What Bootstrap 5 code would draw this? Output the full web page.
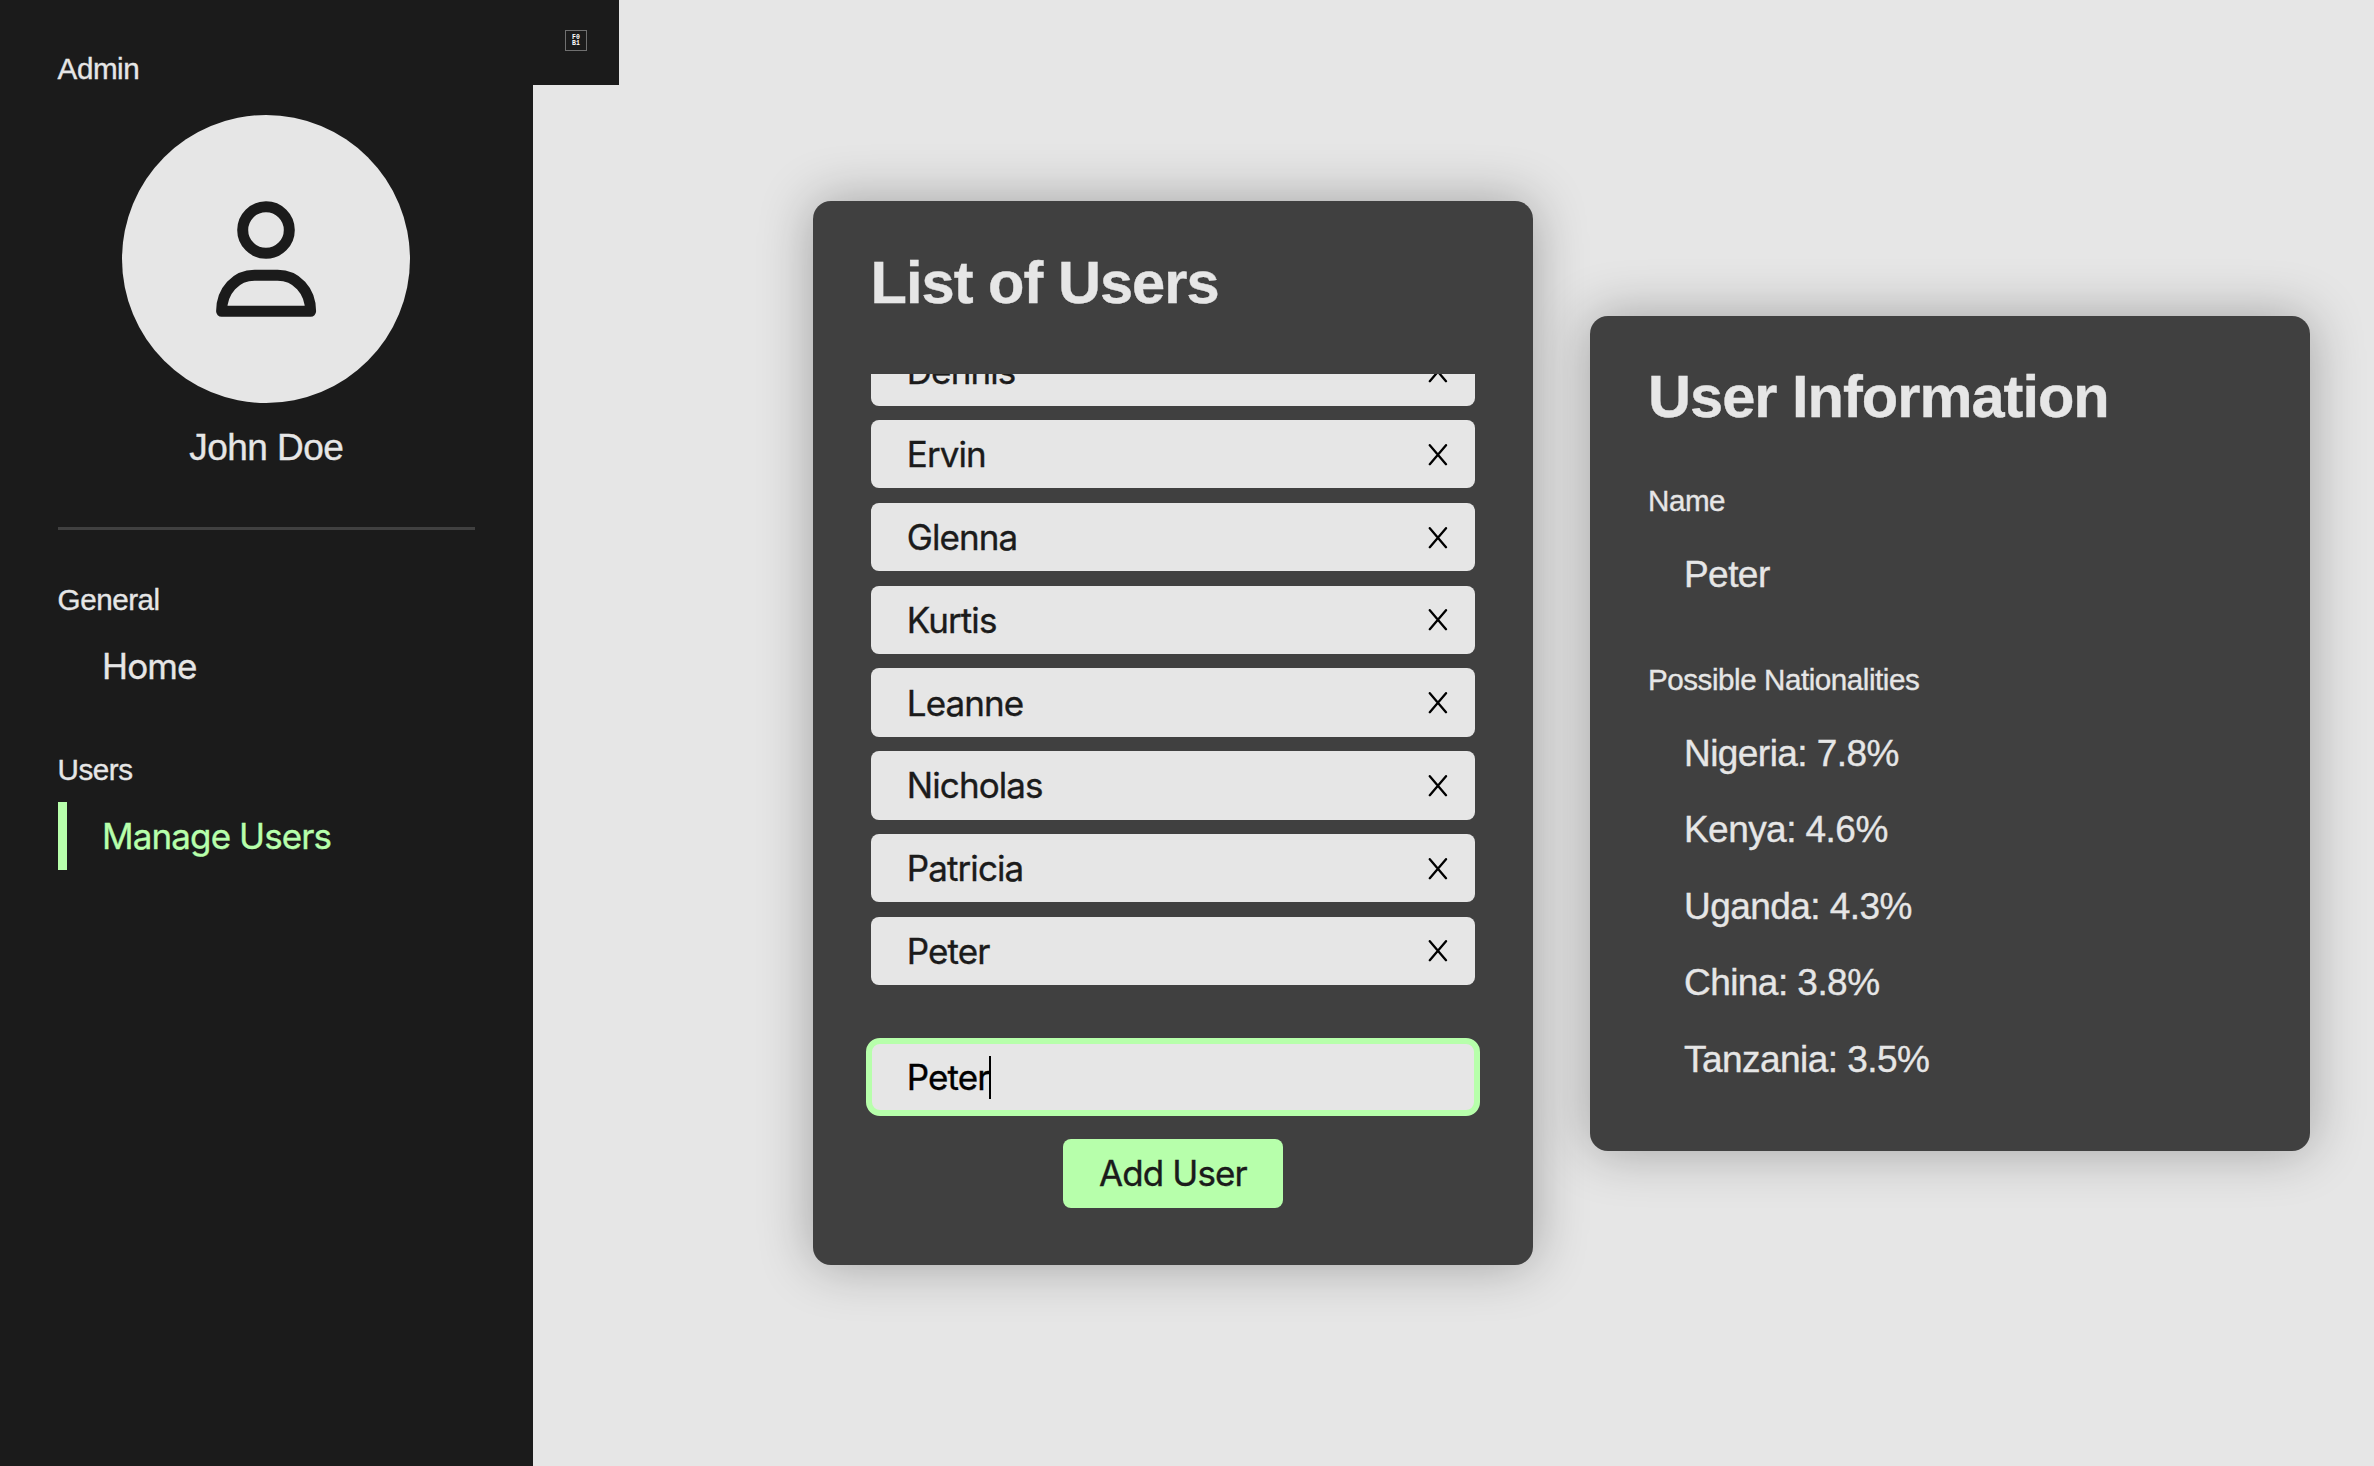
<!DOCTYPE html>
<html lang="en">
<head>
<meta charset="utf-8">
<meta name="viewport" content="width=device-width, initial-scale=1">
<title>Manage Users</title>
<link rel="stylesheet" href="https://cdn.jsdelivr.net/npm/bootstrap@5.3.0/dist/css/bootstrap.min.css">
<style>
  :root { --ink: #1b1b1b; --paper: #e6e6e6; --panel: #404040; --accent: #b7ffab; }
  body { font-family: "Liberation Sans", Arial, sans-serif; font-size: 37px; letter-spacing: -.55px; line-height: 1; background: var(--paper); color: var(--paper); height: 1466px; -webkit-text-stroke: .35px; }
  .sidebar { width: 532.6px; background: var(--ink); padding: 54.6px 57.6px 0; }
  .side-toggle { left: 532px; top: 0; width: 87px; height: 85px; background: var(--ink); padding: 30px 0 0 33px; }
  .glyph-box { width: 22px; height: 21px; border: 1px solid #707070; font: bold 6.5px/6px "Liberation Mono", monospace; letter-spacing: 0; color: #fff; -webkit-text-stroke: 0; }
  .caption-text { font-size: 29.6px; line-height: 28.8px; letter-spacing: -.45px; }
  .avatar { width: 288px; height: 288px; background: var(--paper); margin-top: 31.6px; }
  .user-name { margin-top: 26.8px; line-height: 36px; }
  .divider { height: 3px; background: var(--panel); margin: 61px 0 56px; }
  .ui-text { font-family: Inter, "Liberation Sans", sans-serif; font-size: 35px; letter-spacing: -.9px; }
  .side-link { height: 68.4px; margin-top: 17.900px; margin-bottom: 54.9px; border-left: 9px solid transparent; padding-left: 35.500px; color: var(--paper); }
  .side-link.active { border-color: var(--accent); color: var(--accent); margin-top: 17.400px; }
  main { padding-left: 280.4px; gap: 57.4px; }
  .panel { width: 720px; background: var(--panel); border-radius: 18px; padding: 57.6px; box-shadow: 0 0 54px rgba(0,0,0,.3); }
  .panel h2 { font-size: 59.6px; line-height: 51px; font-weight: 700; letter-spacing: -1px; margin: -1px 0 0; }
  .user-list { height: 611px; margin: 66px 0 57.4px; gap: 14.4px; }
  .user-item { height: 68.4px; background: var(--paper); color: var(--ink); border-radius: 8px; padding: 1px 27.500px 0 36.200px; }
  .name-input { height: 68.4px; background: var(--paper); color: #000; border-radius: 9px; outline: 6.600px solid var(--accent); outline-offset: -1.3px; padding: 1px 0 0 36.200px; }
  .caret { width: 2px; height: 43px; background: #000; margin-left: -.5px; }
  .add-btn { height: 68.4px; width: 219.6px; background: var(--accent); color: var(--ink); border-radius: 8px; margin-top: 28.6px; line-height: 1; -webkit-text-stroke: .35px; }
  .info { height: 835px; }
  .info h2 { margin-top: -2px; }
  .info dl { padding-top: 65px; }
  .info dt { font-weight: 400; }
  .info dd { line-height: 76.4px; margin: 0 0 0 36px; }
  .info dd + dt { margin-top: 52px; }
  .info dt + dd { margin-top: 21.4px; }
</style>
</head>
<body class="d-flex position-relative overflow-hidden">
  <aside class="sidebar h-100 flex-shrink-0">
    <div class="caption-text">Admin</div>
    <div class="avatar rounded-circle mx-auto">
      <svg class="d-block" width="288" height="288" viewBox="0 0 288 288" fill="none" stroke="#1b1b1b" stroke-width="11" stroke-linejoin="round">
        <circle cx="144" cy="115" r="23.3"/>
        <path d="M99.6 196.3C99.6 175.5 114 160.3 132.6 160.3H155.6C174.200 160.3 188.600 175.5 188.600 196.3Z"/>
      </svg>
    </div>
    <div class="user-name text-center">John Doe</div>
    <div class="divider"></div>
    <div class="caption-text">General</div>
    <a class="side-link ui-text d-flex align-items-center text-decoration-none" href="#">Home</a>
    <div class="caption-text">Users</div>
    <a class="side-link ui-text active d-flex align-items-center text-decoration-none" href="#">Manage Users</a>
  </aside>
  <div class="side-toggle position-absolute"><div class="glyph-box d-flex flex-column align-items-center justify-content-center"><span>F0</span><span>B1</span></div></div>
  <main class="d-flex align-items-center h-100">
    <section class="panel flex-shrink-0">
      <h2>List of Users</h2>
      <div class="user-list ui-text d-flex flex-column justify-content-end overflow-hidden" id="users"></div>
      <div class="name-input ui-text d-flex align-items-center"><span>Peter</span><span class="caret"></span></div>
      <div class="text-center"><button class="add-btn ui-text btn border-0 p-0 align-top">Add User</button></div>
    </section>
    <section class="panel info flex-shrink-0">
      <h2>User Information</h2>
      <dl class="mb-0">
        <dt class="caption-text">Name</dt>
        <dd>Peter</dd>
        <dt class="caption-text">Possible Nationalities</dt>
        <dd>Nigeria: 7.8%</dd><dd>Kenya: 4.6%</dd><dd>Uganda: 4.3%</dd><dd>China: 3.8%</dd><dd>Tanzania: 3.5%</dd>
      </dl>
    </section>
  </main>
<script src="https://cdn.jsdelivr.net/npm/bootstrap@5.3.0/dist/js/bootstrap.bundle.min.js"></script>
<script>
  document.getElementById('users').innerHTML = ['Dennis','Ervin','Glenna','Kurtis','Leanne','Nicholas','Patricia','Peter'].map(n =>
    `<div class="user-item d-flex flex-shrink-0 align-items-center justify-content-between"><span>${n}</span><svg width="20" height="22" viewBox="0 0 20 22" stroke="#000" stroke-width="2.3" stroke-linecap="round"><path d="M1.800 1.200L18 20.200M18 1.200L1.800 20.200"/></svg></div>`).join('');
</script>
</body>
</html>
